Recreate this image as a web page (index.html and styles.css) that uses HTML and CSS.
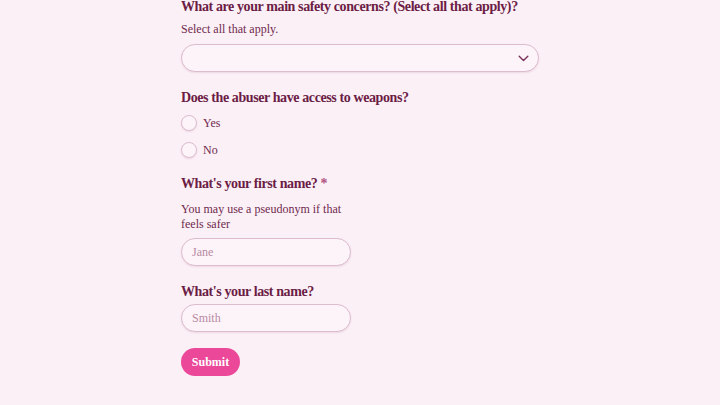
FILE: index.html
```html
<!DOCTYPE html>
<html lang="en">
<head>
<meta charset="utf-8">
<title>Safety form</title>
<link rel="stylesheet" href="styles.css">
</head>
<body>
<form class="form">
  <div class="field">
    <label class="label">What are your main safety concerns? (Select all that apply)?</label>
    <p class="help help-first">Select all that apply.</p>
    <div class="select">
      <svg class="chevron" width="11" height="7" viewBox="0 0 11 7"><path d="M1.2 1.2 L5.5 5.5 L9.8 1.2" fill="none" stroke="#7a3358" stroke-width="1.4" stroke-linecap="round" stroke-linejoin="round"/></svg>
    </div>
  </div>
  <div class="field">
    <label class="label">Does the abuser have access to weapons?</label>
    <div class="radios">
      <div class="radio-row"><span class="radio"></span><span class="radio-label">Yes</span></div>
      <div class="radio-row"><span class="radio"></span><span class="radio-label">No</span></div>
    </div>
  </div>
  <div class="field half">
    <label class="label">What's your first name? <span class="req">*</span></label>
    <p class="help">You may use a pseudonym if that feels safer</p>
    <div class="input"><span class="placeholder">Jane</span></div>
  </div>
  <div class="field half">
    <label class="label">What's your last name?</label>
    <div class="input"><span class="placeholder">Smith</span></div>
  </div>
  <button type="button" class="submit">Submit</button>
</form>
</body>
</html>
```
FILE: styles.css
```css
html, body {
  margin: 0;
  padding: 0;
  background: #fcf0f7;
}
body {
  font-family: "Liberation Serif", "Times New Roman", serif;
  color: #6b1d45;
}
.form {
  width: 358px;
  margin: -3px auto 0;
  display: flex;
  flex-direction: column;
  align-items: flex-start;
}
.field {
  width: 100%;
  display: flex;
  flex-direction: column;
  margin-bottom: 16px;
}
.field.half {
  width: 170px;
}
.label {
  font-size: 14px;
  line-height: 20px;
  font-weight: 700;
  letter-spacing: -0.4px;
  margin-bottom: 2px;
  white-space: nowrap;
}
.req {
  color: #b0527f;
}
.help {
  margin: 6px 0 6px;
  font-size: 12px;
  line-height: 15px;
  color: #6f2a4d;
}
.help-first {
  margin-top: 2px;
  margin-bottom: 7px;
  line-height: 16px;
}
.select, .input {
  box-sizing: border-box;
  height: 28px;
  border: 1px solid #dcbccd;
  border-radius: 9999px;
  background: #fdf4f9;
  box-shadow: 0 1px 2px rgba(120, 40, 80, 0.12);
  display: flex;
  align-items: center;
}
.select {
  width: 100%;
  justify-content: flex-end;
  padding-right: 9px;
}
.input {
  width: 100%;
  padding-left: 10px;
}
.placeholder {
  font-size: 12px;
  color: #b88aa3;
}
.radios {
  display: flex;
  flex-direction: column;
  gap: 11px;
  padding-top: 5px;
}
.radio-row {
  display: flex;
  align-items: center;
  gap: 6px;
  height: 16px;
}
.radio {
  box-sizing: border-box;
  width: 16px;
  height: 16px;
  border-radius: 50%;
  border: 1px solid #dcbccd;
  background: #fdf4f9;
  box-shadow: 0 1px 2px rgba(120, 40, 80, 0.12);
}
.radio-label {
  font-size: 12px;
  color: #6f2a4d;
}
.submit {
  height: 28px;
  width: 59px;
  border: none;
  border-radius: 9999px;
  background: #ec4899;
  color: #ffffff;
  font-family: "Liberation Serif", "Times New Roman", serif;
  font-weight: 700;
  font-size: 12px;
  padding: 0;
  margin-top: 0;
}
```
